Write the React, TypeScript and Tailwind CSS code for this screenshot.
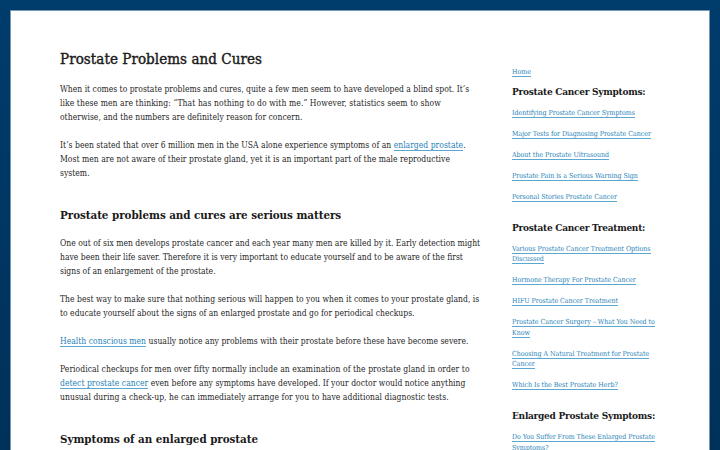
import type { ReactNode } from "react"

const symptomLinks = [
  ["Identifying Prostate Cancer Symptoms"],
  ["Major Tests for Diagnosing Prostate Cancer"],
  ["About the Prostate Ultrasound"],
  ["Prostate Pain is a Serious Warning Sign"],
  ["Personal Stories Prostate Cancer"],
]

const treatmentLinks = [
  ["Various Prostate Cancer Treatment Options", "Discussed"],
  ["Hormone Therapy For Prostate Cancer"],
  ["HIFU Prostate Cancer Treatment"],
  ["Prostate Cancer Surgery – What You Need to", "Know"],
  ["Choosing A Natural Treatment for Prostate", "Cancer"],
  ["Which Is the Best Prostate Herb?"],
]

const enlargedLinks = [["Do You Suffer From These Enlarged Prostate", "Symptoms?"]]

function TextLink({ children }: { children: ReactNode }) {
  return (
    <a href="#" className="text-[#1f83b8] shadow-[0_1px_0_#5aa8d0]">
      {children}
    </a>
  )
}

function Paragraph({ lines, className = "" }: { lines: ReactNode[]; className?: string }) {
  return (
    <p className={`mb-[14px] text-[8.5px] leading-[14px] text-[#1f1f1f] ${className}`}>
      {lines.map((line, i) => (
        <span key={i} className="block">{line}</span>
      ))}
    </p>
  )
}

function Heading({ children }: { children: ReactNode }) {
  return (
    <h2 className="mt-7 mb-[14px] text-[11.5px] leading-[14px] font-bold tracking-[-0.05px] text-[#1a1a1a]">
      {children}
    </h2>
  )
}

function LinkGroup({ title, links }: { title: string; links: string[][] }) {
  return (
    <section className="mb-[19.5px]">
      <h3 className="mb-[10px] text-[10px] leading-[12px] font-bold tracking-[-0.26px] text-[#1a1a1a]">{title}</h3>
      {links.map((lines) => (
        <p key={lines[0]} className="mb-[10.5px] text-[7px] leading-[10.5px] tracking-[-0.03px]">
          {lines.map((line) => (
            <span key={line} className="block">
              <TextLink>{line}</TextLink>
            </span>
          ))}
        </p>
      ))}
    </section>
  )
}

export default function App() {
  return (
    <div className="h-[450px] overflow-hidden bg-[#003a68] bg-linear-to-b from-[#003c6c] to-[#003159] p-[10px] pb-0 font-['DejaVu_Serif_Condensed','DejaVu_Serif',serif] font-stretch-condensed whitespace-nowrap">
      <div className="flex h-[470px] border border-[#7796b0] bg-white pl-[49px]">

        {/* article */}
        <main className="w-[452px] shrink-0 pt-[39px]">
          <h1 className="mb-[14px] text-[15px] leading-[18px] tracking-[0.06px] text-[#1a1a1a] [-webkit-text-stroke:0.4px_#1a1a1a]">
            Prostate Problems and Cures
          </h1>
          <Paragraph
            lines={[
              "When it comes to prostate problems and cures, quite a few men seem to have developed a blind spot. It’s",
              <span className="tracking-[0.07px]">like these men are thinking: “That has nothing to do with me.” However, statistics seem to show</span>,
              <span className="tracking-[0.02px]">otherwise, and the numbers are definitely reason for concern.</span>,
            ]}
          />
          <Paragraph
            className="tracking-[0.02px]"
            lines={[
              <>It’s been stated that over 6 million men in the USA alone experience symptoms of an <TextLink>enlarged prostate</TextLink>.</>,
              "Most men are not aware of their prostate gland, yet it is an important part of the male reproductive",
              "system.",
            ]}
          />

          <Heading>Prostate problems and cures are serious matters</Heading>
          <Paragraph
            lines={[
              "One out of six men develops prostate cancer and each year many men are killed by it. Early detection might",
              "have been their life saver. Therefore it is very important to educate yourself and to be aware of the first",
              "signs of an enlargement of the prostate.",
            ]}
          />
          <Paragraph
            lines={[
              <span className="tracking-[0.02px]">The best way to make sure that nothing serious will happen to you when it comes to your prostate gland, is</span>,
              "to educate yourself about the signs of an enlarged prostate and go for periodical checkups.",
            ]}
          />
          <Paragraph
            className="tracking-[0.02px]"
            lines={[
              <><TextLink>Health conscious men</TextLink> usually notice any problems with their prostate before these have become severe.</>,
            ]}
          />
          <Paragraph
            className="tracking-[0.04px]"
            lines={[
              <span className="tracking-[0.05px]">Periodical checkups for men over fifty normally include an examination of the prostate gland in order to</span>,
              <span className="tracking-[0.02px]"><TextLink>detect prostate cancer</TextLink> even before any symptoms have developed. If your doctor would notice anything</span>,
              "unusual during a check-up, he can immediately arrange for you to have additional diagnostic tests.",
            ]}
          />

          <Heading>Symptoms of an enlarged prostate</Heading>
        </main>

        {/* sidebar */}
        <aside className="w-[147px] pt-[56px]">
          <p className="mb-[8px] text-[7px] leading-[10.5px]">
            <TextLink>Home</TextLink>
          </p>
          <LinkGroup title="Prostate Cancer Symptoms:" links={symptomLinks} />
          <LinkGroup title="Prostate Cancer Treatment:" links={treatmentLinks} />
          <LinkGroup title="Enlarged Prostate Symptoms:" links={enlargedLinks} />
        </aside>
      </div>
    </div>
  )
}
